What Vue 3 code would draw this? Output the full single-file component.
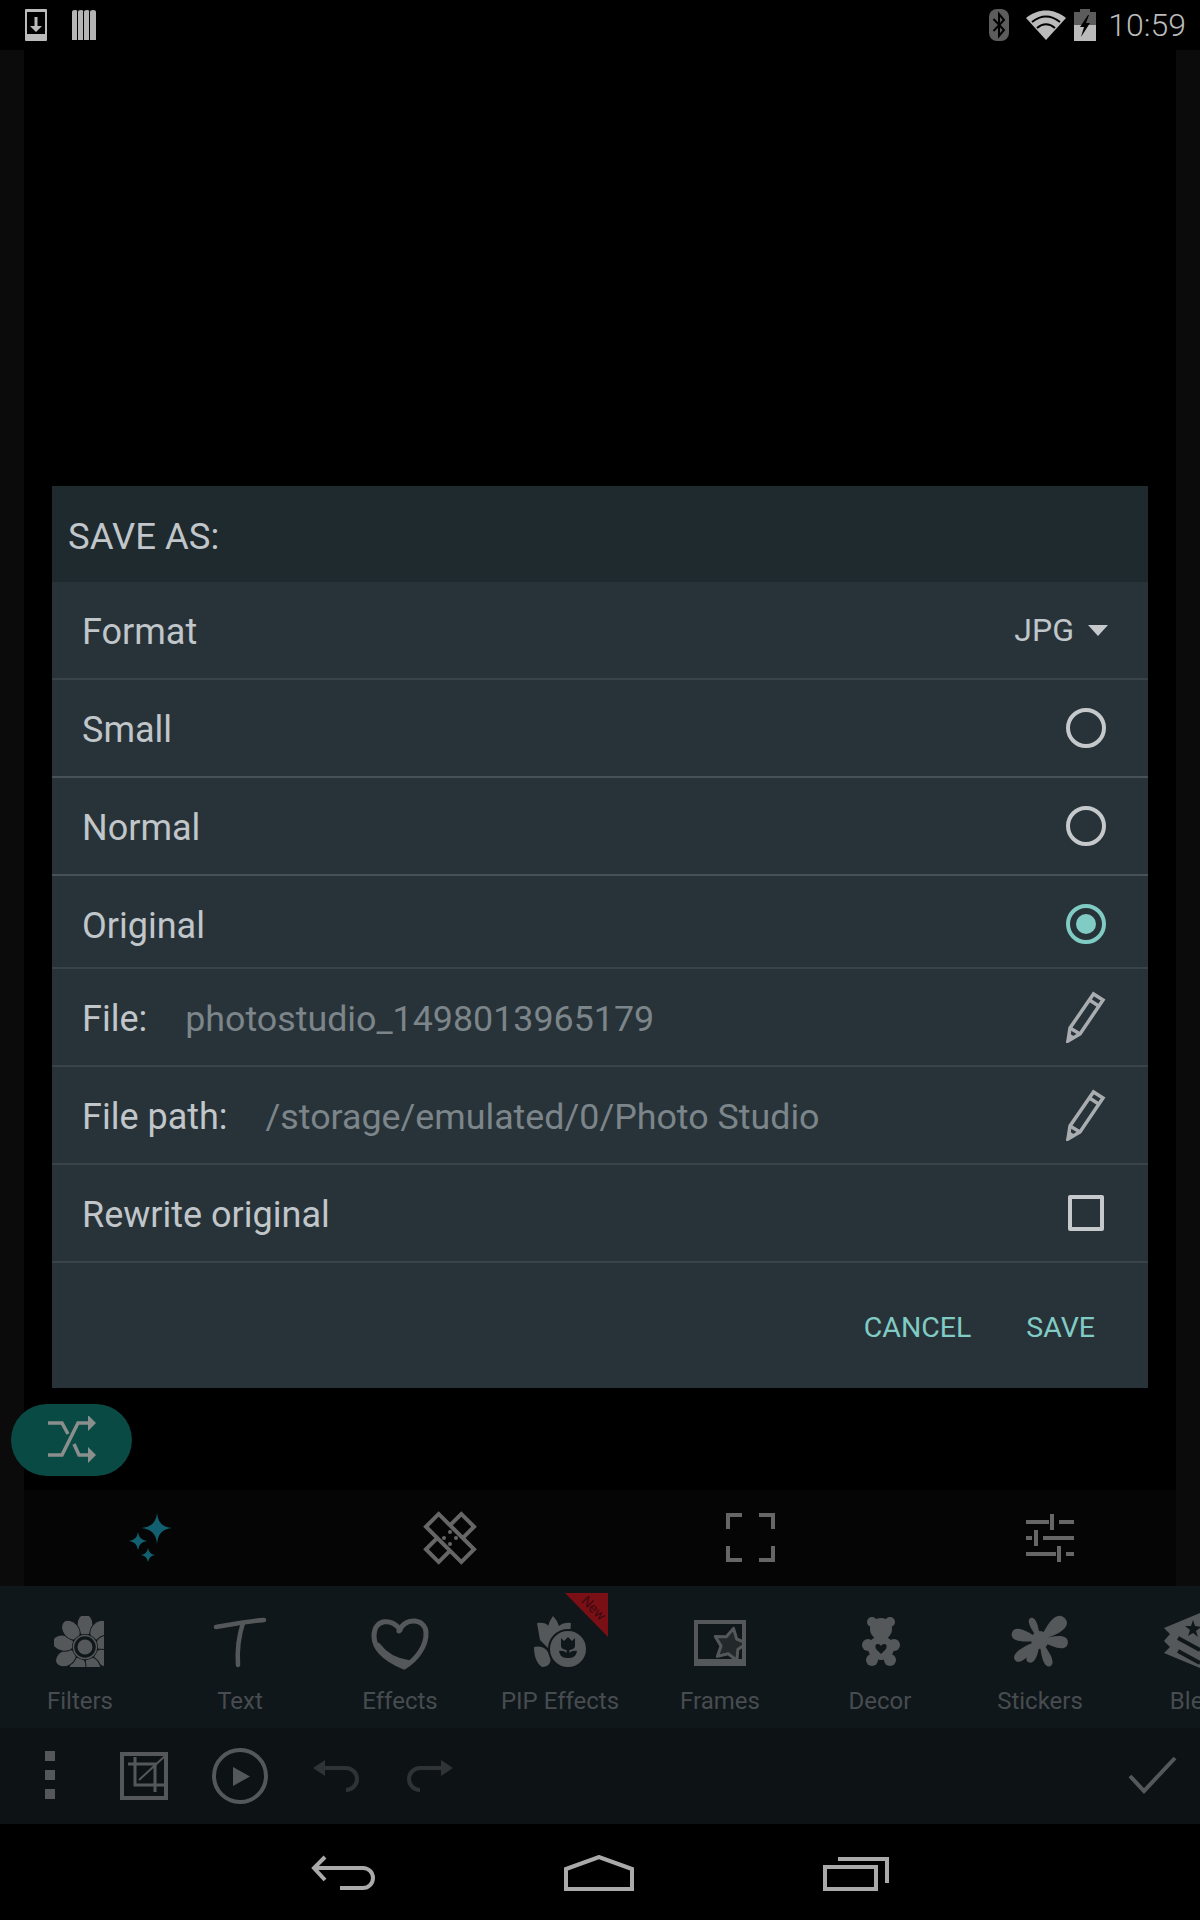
<script setup>
const petals = [0, 40, 80, 120, 160, 200, 240, 280, 320]
// sticker arms: angle from straight up, length, half width
const splats = [
  { a: 337, l: 24, w: 5 }, { a: 49, l: 33, w: 10 }, { a: 96, l: 28, w: 8 }, { a: 159, l: 28, w: 6 },
  { a: 207, l: 25, w: 6 }, { a: 231, l: 32, w: 7 }, { a: 284, l: 29, w: 8 },
]
function armPath(s) {
  return `M0 0C${-s.w} ${-s.l * 0.6} ${-s.w} ${-s.l} 0 ${-s.l}C${s.w} ${-s.l} ${s.w} ${-s.l * 0.6} 0 0Z`
}
const pencilPaths = ['M2 50 4 37 27.500 3 37 9 14 43Z', 'M23.500 9 33.500 15.500', 'M4 37 14 43']
</script>

<template>
  <div class="screen">
    <div class="status-bar">
      <svg class="status-download" width="22" height="32" viewBox="0 0 22 32">
        <path d="M1 0h20a1 1 0 0 1 1 1v30a1 1 0 0 1-1 1H1a1 1 0 0 1-1-1V1a1 1 0 0 1 1-1Zm1 3v22h18V3Z" fill="#bbb" fill-rule="evenodd" />
        <path d="M9.500 8h3v9H17l-6 6-6-6h4.500Z" fill="#bbb" />
      </svg>
      <svg width="24" height="30" viewBox="0 0 24 30">
        <path d="M0 2q0-2 3-2t2 2v28H0ZM6 2q0-2 3-2t2 2v28H6ZM12 2q0-2 3-2t2 2v28h-5ZM18 2q0-2 3-2t3 2v28h-6Z" fill="#b5b5b5" />
      </svg>
      <div class="status-right">
        <svg width="20" height="32" viewBox="0 0 20 32">
          <rect width="20" height="32" rx="8" fill="#5c5c5c" />
          <path d="M4.500 10 15 21l-5 6V5l5 6L4.500 22" fill="none" stroke="#000" stroke-width="2" />
        </svg>
        <svg class="status-wifi" width="40" height="30" viewBox="0 0 40 30">
          <path d="M20 30 0 8C12-2 28-2 40 8Z" fill="#bbb" />
          <path d="M6 12C15 5 25 5 34 12M11 18C17 13 23 13 29 18" fill="none" stroke="#000" stroke-width="2" />
        </svg>
        <svg class="status-battery" width="22" height="32" viewBox="0 0 22 32">
          <path d="M6 0h10v3h6v13H0V3h6Z" fill="#5c5c5c" />
          <path d="M0 16h22v16H0Z" fill="#bbb" />
          <path d="M14 6 6 18h4l-3 10 9-14h-4l3-8Z" fill="#000" />
        </svg>
        <span class="status-time">10:59</span>
      </div>
    </div>

    <div class="stage"></div>

    <div class="effects-bar">
      <div class="effects-item">
        <svg width="64" height="64" viewBox="0 0 64 64" fill="#12606f">
          <path d="M39 7Q40 21 54 22 40 23 39 38 38 23 23 22 38 21 39 7Z" />
          <path d="M20 26Q21 34 29 35 21 36 20 44 19 36 11 35 19 34 20 26Z" />
          <path d="M30 42Q31 48 37 49 31 50 30 56 29 50 23 49 29 48 30 42Z" />
        </svg>
      </div>
      <div class="effects-item">
        <svg width="64" height="64" viewBox="0 0 64 64">
          <g fill="#050505" stroke="#666" stroke-width="4">
            <rect x="23" y="7" width="18" height="50" transform="rotate(45 32 32)" />
            <rect x="23" y="7" width="18" height="50" transform="rotate(-45 32 32)" />
          </g>
          <g fill="#666">
            <circle cx="32" cy="26" r="2" /><circle cx="38" cy="32" r="2" />
            <circle cx="26" cy="32" r="2" /><circle cx="32" cy="38" r="2" />
          </g>
        </svg>
      </div>
      <div class="effects-item">
        <svg width="64" height="64" viewBox="0 0 64 64" fill="none" stroke="#666" stroke-width="4">
          <path d="M24 9H10V23M41 9H55V23M10 40V54H24M55 40V54H41" />
        </svg>
      </div>
      <div class="effects-item">
        <svg width="64" height="64" viewBox="0 0 64 64" fill="none" stroke="#666" stroke-width="4">
          <path d="M8 16H31M34 8V24M41 16H56M8 32H14M18 24V40M25 32H56M8 48H38M41 40V56M48 48H56" />
        </svg>
      </div>
    </div>

    <div class="tool-strip">
      <div class="tool">
        <svg width="64" height="64" viewBox="0 0 64 64" fill="#55585a">
          <clipPath id="flower-clip"><rect x="6" y="6" width="50" height="51" /></clipPath>
          <g clip-path="url(#flower-clip)">
            <ellipse v-for="a in petals" :key="a" cx="37" cy="15" rx="8" ry="11" stroke="#10171a" stroke-width="1" :transform="`rotate(${a} 37 37)`" />
            <circle cx="37" cy="37" r="13" fill="#10171a" />
            <circle cx="37" cy="37" r="11.500" fill="none" stroke="#55585a" stroke-width="1.500" />
            <circle cx="37" cy="37" r="7.500" />
          </g>
        </svg>
        <span>Filters</span>
      </div>
      <div class="tool">
        <svg width="64" height="64" viewBox="0 0 64 64" fill="none" stroke="#55585a" stroke-width="4.500" stroke-linecap="round">
          <path d="M8 17C22 15 40 11 56 10" />
          <path d="M35 13C31 25 29 40 30 55" />
        </svg>
        <span>Text</span>
      </div>
      <div class="tool">
        <svg width="64" height="64" viewBox="0 0 64 64" fill="none" stroke="#55585a" stroke-width="5" stroke-linecap="round">
          <path d="M32 20C25 8 6 8 6 26 6 42 24 52 36 57 48 50 59 36 58 22 57 9 38 6 31 21" />
          <path d="M10 36C18 47 28 51 40 53" stroke-width="6" />
        </svg>
        <span>Effects</span>
      </div>
      <div class="tool">
        <svg width="64" height="64" viewBox="0 0 64 64" fill="#55585a">
          <path d="M9 13Q18 12 20 16 22 10 25 6 29 10 31 16 36 12 43 13L42 24 22 40 12 30Z" />
          <path d="M6 37C14 35 20 39 22 47 24 53 20 57 14 57 8 53 6 45 6 37Z" />
          <ellipse cx="40" cy="39" rx="19" ry="19" stroke="#10171a" stroke-width="2" />
          <path d="M33 28 36 31 40 27 44 31 47 28V36Q47 39 41.500 40V43Q44 40 49 41 48 48 41.500 48H38.500Q32 48 31 41 36 40 38.500 43V40Q33 39 33 36Z" fill="#10171a" />
        </svg>
        <span>PIP Effects</span>
        <div class="new-badge"><em>New</em></div>
      </div>
      <div class="tool">
        <svg width="64" height="64" viewBox="0 0 64 64">
          <clipPath id="frame-clip"><rect x="6" y="10" width="50" height="40" /></clipPath>
          <path clip-path="url(#frame-clip)" d="M45.500 18.400 48.700 29 58.900 33.200 49.800 39.500 48.900 50.500 40.100 43.800 29.400 46.400 33 35.900 27.300 26.500 38.300 26.800Z" fill="#23282a" stroke="#55585a" stroke-width="3" stroke-linejoin="round" />
          <path d="M6 10H58V56H6ZM10 14V49H54V14Z" fill="#55585a" fill-rule="evenodd" />
        </svg>
        <span>Frames</span>
      </div>
      <div class="tool">
        <svg width="64" height="64" viewBox="0 0 64 64" fill="#55585a">
          <circle cx="24" cy="12" r="5" /><circle cx="42" cy="12" r="5" />
          <circle cx="33" cy="19" r="11" />
          <ellipse cx="33" cy="38" rx="13" ry="12" />
          <circle cx="20" cy="35" r="6" /><circle cx="46" cy="35" r="6" />
          <circle cx="24" cy="50" r="6" /><circle cx="42" cy="50" r="6" />
          <path d="M33 44 28 39Q26 34 30 34 32 34 33 36 34 34 36 34 40 34 38 39Z" fill="#10171a" />
        </svg>
        <span>Decor</span>
      </div>
      <div class="tool">
        <svg width="64" height="64" viewBox="0 0 64 64" fill="#55585a">
          <circle cx="32" cy="30" r="9" />
          <path v-for="s in splats" :key="s.a" :d="armPath(s)" :transform="`translate(32 30) rotate(${s.a})`" />
        </svg>
        <span>Stickers</span>
      </div>
      <div class="tool">
        <svg class="blend-icon" width="64" height="64" viewBox="0 0 64 64">
          <path d="M-4 18 32 3V58L-4 43 2 37-4 31 2 24Z" fill="#55585a" />
          <path d="M10 28 32 40M10 41 32 53" fill="none" stroke="#10171a" stroke-width="4" />
          <path d="M25 10 27 16 33 17 28 21 30 27 25 23 20 26 22 20 17 16 23 16Z" fill="#10171a" />
        </svg>
        <span>Blend</span>
      </div>
    </div>

    <div class="action-bar">
      <button class="action">
        <svg width="64" height="64" viewBox="0 0 64 64" fill="#55585a">
          <rect x="29" y="7" width="10" height="10" /><rect x="29" y="26" width="10" height="10" /><rect x="29" y="45" width="10" height="10" />
        </svg>
      </button>
      <button class="action">
        <svg width="64" height="64" viewBox="0 0 64 64" fill="none" stroke="#55585a">
          <rect x="10" y="10" width="44" height="44" stroke-width="4" />
          <path d="M16 20H43V48M23 13V41H53" stroke-width="3" />
          <path d="M27 36 53 12" stroke-width="2" />
        </svg>
      </button>
      <button class="action">
        <svg width="64" height="64" viewBox="0 0 64 64">
          <circle cx="32" cy="32" r="26" fill="none" stroke="#55585a" stroke-width="4" />
          <path d="M25 23 42 32.500 25 42Z" fill="#55585a" />
        </svg>
      </button>
      <button class="action">
        <svg width="64" height="64" viewBox="0 0 64 64">
          <path d="M16 24H42A11 11 0 0 1 42 46" fill="none" stroke="#2f3335" stroke-width="4" />
          <path d="M9 24 21 16V32Z" fill="#2f3335" />
        </svg>
      </button>
      <button class="action">
        <svg width="64" height="64" viewBox="0 0 64 64">
          <path d="M46 24H20A11 11 0 0 0 20 46" fill="none" stroke="#2f3335" stroke-width="4" />
          <path d="M53 24 41 16V32Z" fill="#2f3335" />
        </svg>
      </button>
      <button class="action action-done">
        <svg width="64" height="64" viewBox="0 0 64 64" fill="none" stroke="#55585a" stroke-width="4">
          <path d="M10 32 24 47 55 14" />
        </svg>
      </button>
    </div>

    <div class="nav-bar">
      <svg width="64" height="36" viewBox="0 0 64 36" fill="none" stroke="#aaa" stroke-width="4">
        <path d="M14 2 3 13 14 25M3 13H52A10 10 0 0 1 52 33H29" />
      </svg>
      <svg width="70" height="36" viewBox="0 0 70 36" fill="none" stroke="#aaa" stroke-width="4">
        <path d="M2 34V14L35 2 68 14V34Z" />
      </svg>
      <svg width="66" height="36" viewBox="0 0 66 36" fill="none" stroke="#aaa" stroke-width="4">
        <path d="M2 12H53V34H2ZM15 4H64V28" />
      </svg>
    </div>

    <div class="fab">
      <svg width="48" height="48" viewBox="0 0 48 48" fill="none" stroke="#8a8f8d" stroke-width="3.500">
        <path d="M0 7H14L20 18M26 28 31 39H40M0 39H14L30 7H40" />
        <path d="M48 7 40-1V15ZM48 39 40 31V47Z" fill="#8a8f8d" stroke="none" />
      </svg>
    </div>

    <div class="dialog">
      <div class="dialog-title">SAVE AS:</div>
      <div class="row">
        <span>Format</span>
        <div class="format-select">JPG<i></i></div>
      </div>
      <div class="row row-bright">
        <span>Small</span>
        <svg width="40" height="40" viewBox="0 0 40 40"><circle cx="20" cy="20" r="18" fill="none" stroke="#c5c9cc" stroke-width="4" /></svg>
      </div>
      <div class="row row-bright">
        <span>Normal</span>
        <svg width="40" height="40" viewBox="0 0 40 40"><circle cx="20" cy="20" r="18" fill="none" stroke="#c5c9cc" stroke-width="4" /></svg>
      </div>
      <div class="row row-short">
        <span>Original</span>
        <svg width="40" height="40" viewBox="0 0 40 40"><circle cx="20" cy="20" r="18" fill="none" stroke="#80cbc4" stroke-width="4" /><circle cx="20" cy="20" r="10" fill="#80cbc4" /></svg>
      </div>
      <div class="row">
        <span>File:</span>
        <span class="value">photostudio_1498013965179</span>
        <svg class="pencil" width="40" height="52" viewBox="0 0 40 52" fill="none" stroke="#a9adb0" stroke-width="3.500">
          <path v-for="d in pencilPaths" :key="d" :d="d" />
          <path d="M0 52 3 42 9 46Z" fill="#a9adb0" stroke="none" />
        </svg>
      </div>
      <div class="row">
        <span>File path:</span>
        <span class="value">/storage/emulated/0/Photo Studio</span>
        <svg class="pencil" width="40" height="52" viewBox="0 0 40 52" fill="none" stroke="#a9adb0" stroke-width="3.500">
          <path v-for="d in pencilPaths" :key="d" :d="d" />
          <path d="M0 52 3 42 9 46Z" fill="#a9adb0" stroke="none" />
        </svg>
      </div>
      <div class="row">
        <span>Rewrite original</span>
        <div class="checkbox"></div>
      </div>
      <div class="dialog-footer">
        <button>CANCEL</button>
        <button>SAVE</button>
      </div>
    </div>
  </div>
</template>

<style scoped>
.screen {
  position: relative;
  width: 1200px;
  height: 1920px;
  display: flex;
  flex-direction: column;
  overflow: hidden;
  background: #000;
  font-family: Roboto, "Liberation Sans", sans-serif;
}
.status-bar {
  flex: none;
  height: 50px;
  display: flex;
  align-items: center;
  gap: 25px;
  padding: 0 14px 0 25px;
  background: #000;
}
.status-right {
  margin-left: auto;
  display: flex;
  align-items: center;
}
.status-wifi {
  margin-left: 17px;
}
.status-battery {
  margin-left: 8px;
}
.status-time {
  margin-left: 12px;
  font-size: 32px;
  font-weight: 300;
  color: #bbb;
}
.stage {
  flex: 1;
  background: linear-gradient(90deg, #0b0b0b 24px, #000 24px, #000 1176px, #0b0b0b 1176px);
}
.effects-bar {
  flex: none;
  height: 96px;
  display: grid;
  grid-template-columns: repeat(4, 1fr);
  background: linear-gradient(90deg, #0b0b0b 24px, #050505 24px, #050505 1176px, #0b0b0b 1176px);
}
.effects-item {
  display: flex;
  align-items: center;
  justify-content: center;
}
.tool-strip {
  flex: none;
  height: 142px;
  display: flex;
  background: #10171a;
  overflow: hidden;
}
.tool {
  position: relative;
  flex: none;
  width: 160px;
  padding-top: 24px;
  display: flex;
  flex-direction: column;
  align-items: center;
  font-size: 24px;
  color: #474c50;
}
.tool span {
  margin-top: 13px;
  white-space: nowrap;
}
.blend-icon {
  overflow: visible;
}
.new-badge {
  position: absolute;
  top: 7px;
  right: 32px;
  width: 43px;
  height: 44px;
  background: #7a0f16;
  clip-path: polygon(0 0, 100% 0, 100% 100%);
}
.new-badge em {
  position: absolute;
  top: 7px;
  left: 15px;
  font-size: 14px;
  font-style: normal;
  color: #3d0a0e;
  transform: rotate(45deg);
}
.action-bar {
  flex: none;
  height: 96px;
  display: flex;
  align-items: center;
  background: #0d1214;
}
.action {
  width: 96px;
  height: 96px;
  display: flex;
  align-items: center;
  justify-content: center;
  padding: 0;
  border: 0;
  background: none;
}
.action-done {
  margin-left: auto;
}
.nav-bar {
  flex: none;
  box-sizing: border-box;
  height: 96px;
  padding-top: 2px;
  display: flex;
  align-items: center;
  justify-content: center;
  gap: 189px;
  background: #000;
}
.fab {
  position: absolute;
  left: 11px;
  top: 1404px;
  width: 121px;
  height: 72px;
  display: flex;
  align-items: center;
  justify-content: center;
  border-radius: 36px;
  background: #0a4a44;
}
.dialog {
  position: absolute;
  left: 52px;
  top: 486px;
  width: 1096px;
  height: 902px;
  display: flex;
  flex-direction: column;
  background: #283339;
  color: #c0c6c9;
  font-size: 36px;
}
.dialog-title {
  box-sizing: border-box;
  height: 96px;
  display: flex;
  align-items: center;
  padding: 4px 0 0 16px;
  font-size: 36.500px;
  background: #1f2a2f;
}
.row {
  box-sizing: border-box;
  height: 98px;
  display: flex;
  align-items: center;
  padding: 0 42px 0 30px;
  border-bottom: 2px solid #394349;
}
.row > span {
  padding-top: 4px;
}
.row-bright {
  border-bottom-color: #475157;
}
.row-short {
  height: 93px;
  padding-top: 4px;
}
.row > svg,
.row > .format-select,
.row > .checkbox {
  margin-left: auto;
}
.value {
  margin-left: 38px;
  font-size: 35.800px;
  color: #7c8589;
}
.format-select {
  display: flex;
  align-items: center;
  font-size: 32px;
}
.format-select i {
  margin: 0 -2px 0 14px;
  border-left: 10px solid transparent;
  border-right: 10px solid transparent;
  border-top: 11px solid #c5c9cc;
}
.checkbox {
  box-sizing: border-box;
  width: 36px;
  height: 36px;
  margin-right: 2px;
  border: 4px solid #c5c9cc;
  border-radius: 2px;
}
.dialog-footer {
  box-sizing: border-box;
  flex: 1;
  display: flex;
  justify-content: flex-end;
  align-items: center;
  gap: 55px;
  padding: 4px 53px 0 0;
}
.dialog-footer button {
  padding: 0;
  border: 0;
  background: none;
  font: inherit;
  font-size: 28.500px;
  color: #80cbc4;
}
</style>
